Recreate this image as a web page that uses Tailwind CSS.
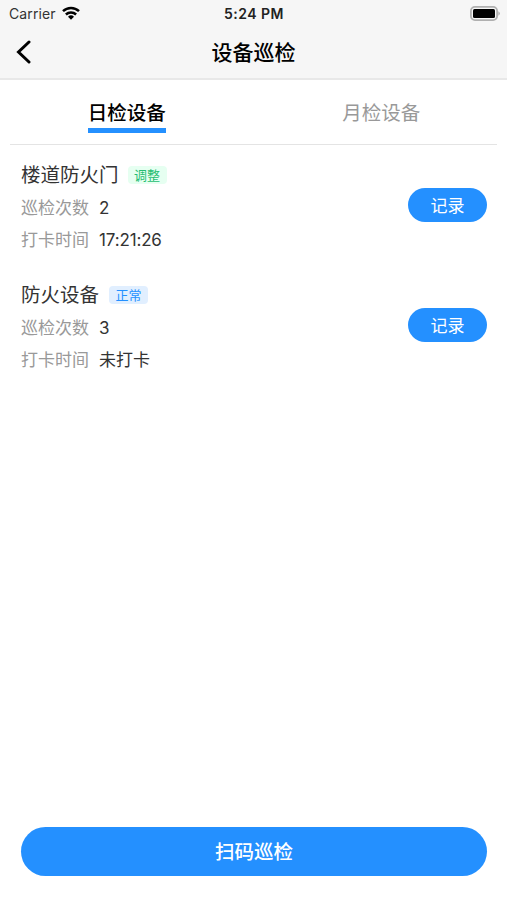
<!DOCTYPE html>
<html lang="zh-CN">
<head>
  <meta charset="UTF-8" />
  <meta name="viewport" content="width=device-width, initial-scale=1.0"/>
  <title>设备巡检</title>
  <script src="https://cdn.jsdelivr.net/npm/@tailwindcss/browser@4"></script>
</head>
<body class="h-screen flex flex-col overflow-hidden bg-white font-['Inter','Noto_Sans_CJK_SC',sans-serif]">

  <!-- Header -->
  <header class="h-[80px] shrink-0 bg-[#f6f6f6] border-b-2 border-[#e8e8e8] text-black">
    <div class="h-[27px] grid grid-cols-3 items-center pl-[9px] pr-[6px] text-[14px] leading-none">
      <div class="flex items-center gap-[6px] text-[#333]">
        <span class="tracking-[0.1px]">Carrier</span>
        <svg class="w-[18px] h-[14px] mb-[1px] text-black" viewBox="0 0 18 14" fill="none" stroke="currentColor" stroke-width="2.5">
          <path d="M1 5.1a11.6 11.6 0 0 1 16 0"/>
          <path d="M3.9 8.5a7.4 7.4 0 0 1 10.2 0"/>
          <path d="M9 13.8 6 10.8a4.3 4.3 0 0 1 6 0z" fill="currentColor" stroke="none"/>
        </svg>
      </div>
      <span class="-ml-[2px] text-center font-semibold text-[#222] tracking-[0.5px]">5:24 PM</span>
      <svg class="justify-self-end w-[31px] h-[15px]" viewBox="0 0 31 15">
        <rect x="0.9" y="0.9" width="26.2" height="13.2" rx="4" fill="#f6f6f6" stroke="#b0b0b0" stroke-width="1.8"/>
        <rect x="3" y="3" width="22" height="9" rx="1.5" fill="#000"/>
        <path d="M28.4 5.2a2.6 2.6 0 0 1 0 4.6z" fill="#a8a8a8"/>
      </svg>
    </div>
    <div class="h-[50px] grid grid-cols-[60px_1fr_60px] items-center">
      <a href="#" class="pl-[15px]">
        <svg class="w-[16px] h-[24px]" viewBox="0 0 16 24" fill="none" stroke="#000" stroke-width="3" stroke-linecap="round">
          <path d="M14 2 3.5 12 14 22"/>
        </svg>
      </a>
      <h1 class="pt-[1px] text-center text-[21px] font-medium">设备巡检</h1>
    </div>
  </header>

  <!-- Tabs -->
  <nav class="mx-[10px] h-[65px] shrink-0 grid grid-cols-2 justify-items-center border-b border-[#e4e4e4] text-[19.5px] leading-[32px]">
    <a href="#" class="mt-[17px] h-[36px] -ml-[10px] border-b-[5px] border-[#2490ff] font-medium text-black">日检设备</a>
    <a href="#" class="mt-[17px] h-[36px] ml-[12px] text-[#999]">月检设备</a>
  </nav>

  <!-- Device list -->
  <main class="flex-1 pl-[21px] pr-[20px] pt-[15px]">
    <section class="h-[120px] flex justify-between">
      <div>
        <div class="h-[32px] flex items-center">
          <h2 class="text-[19.5px] text-[#333]">楼道防火门</h2>
          <span class="ml-[9px] mb-[3px] w-[39px] h-[18px] rounded bg-[#e6fff1] text-center text-[13px] leading-[18px] text-[#27bd72]">调整</span>
        </div>
        <p class="h-[32px] mt-[1px] flex items-center gap-[10px] text-[17px] text-[#999]">巡检次数 <span class="text-[#333]">2</span></p>
        <p class="h-[32px] flex items-center gap-[10px] text-[17px] text-[#999]">打卡时间 <span class="text-[#333] tracking-[-0.15px]">17:21:26</span></p>
      </div>
      <button class="mt-[28px] pt-[3px] w-[79px] h-[34px] rounded-full bg-[#2490ff] text-[17px] text-white">记录</button>
    </section>
    <section class="h-[120px] flex justify-between">
      <div>
        <div class="h-[32px] flex items-center">
          <h2 class="text-[19.5px] text-[#333]">防火设备</h2>
          <span class="ml-[10px] mb-[3px] w-[39px] h-[18px] rounded bg-[#e1efff] text-center text-[13px] leading-[18px] text-[#2490ff]">正常</span>
        </div>
        <p class="h-[32px] mt-[1px] flex items-center gap-[10px] text-[17px] text-[#999]">巡检次数 <span class="text-[#333]">3</span></p>
        <p class="h-[32px] flex items-center gap-[10px] text-[17px] text-[#999]">打卡时间 <span class="text-[#333]">未打卡</span></p>
      </div>
      <button class="mt-[28px] pt-[3px] w-[79px] h-[34px] rounded-full bg-[#2490ff] text-[17px] text-white">记录</button>
    </section>
  </main>

  <!-- Scan button -->
  <footer class="pl-[21px] pr-[20px] pb-[24px]">
    <button class="block w-full h-[49px] pt-[2px] rounded-full bg-[#2490ff] text-[19.5px] font-medium text-white">扫码巡检</button>
  </footer>

</body>
</html>
